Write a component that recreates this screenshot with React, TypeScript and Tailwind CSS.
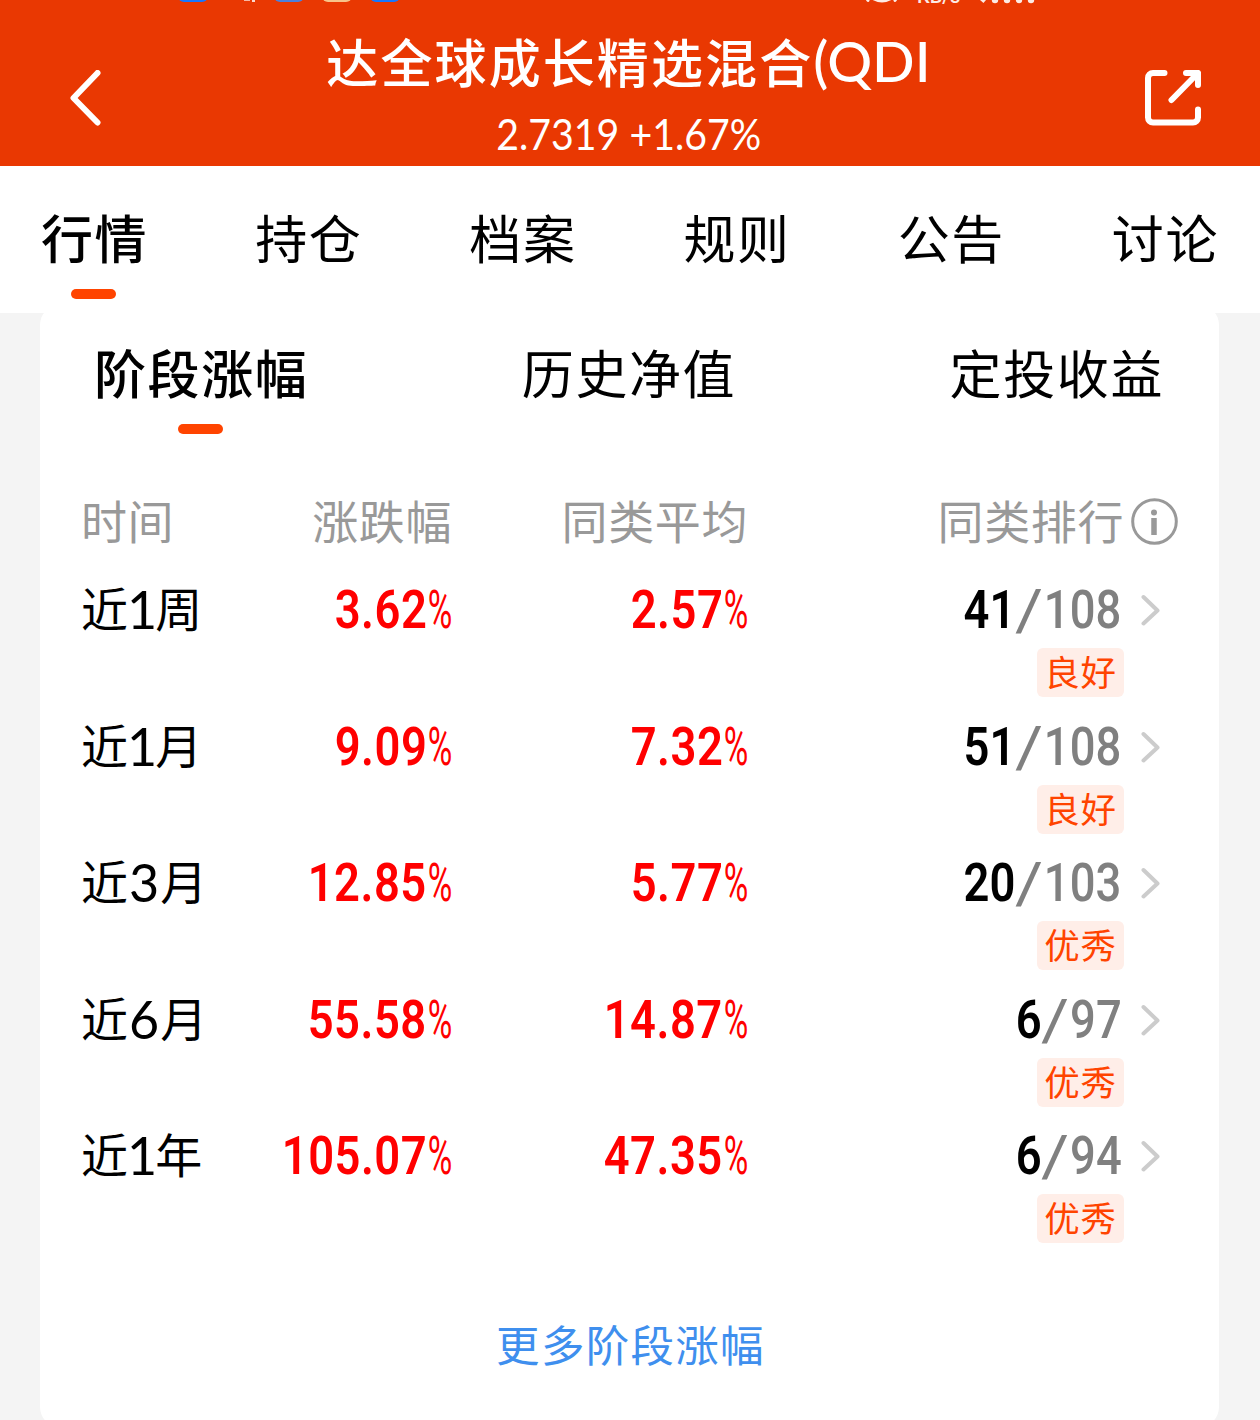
import { clsx } from "clsx";

const tabs = ["行情", "持仓", "档案", "规则", "公告", "讨论"];

const sections = ["阶段涨幅", "历史净值", "定投收益"];

const rows = [
  { pre: "近", n: "1", unit: "周", change: "3.62", average: "2.57", rank: "41", total: "108", grade: "良好" },
  { pre: "近", n: "1", unit: "月", change: "9.09", average: "7.32", rank: "51", total: "108", grade: "良好" },
  { pre: "近", n: "3", unit: "月", change: "12.85", average: "5.77", rank: "20", total: "103", grade: "优秀" },
  { pre: "近", n: "6", unit: "月", change: "55.58", average: "14.87", rank: "6", total: "97", grade: "优秀" },
  { pre: "近", n: "1", unit: "年", change: "105.07", average: "47.35", rank: "6", total: "94", grade: "优秀" },
];

// Bottom edge of the system status bar, cut off by the top of the page
function StatusBar() {
  return (
    <div className="absolute inset-x-0 top-0 h-[5px] overflow-hidden">
      <span className="absolute left-[178px] -top-[26px] h-7 w-[30px] rounded-md bg-[#1677ff]" />
      <span className="absolute left-[244px] top-0 h-px w-[6px] bg-[#f6b8a4]" />
      <span className="absolute left-[252px] top-0 h-[2px] w-[3px] bg-[#fbd9ce]" />
      <span className="absolute left-[274px] -top-[26px] h-7 w-[30px] rounded-md bg-[#4a80dd]" />
      <span className="absolute left-[322px] -top-[26px] h-7 w-[30px] rounded-md bg-[#f7c48a]" />
      <span className="absolute left-[370px] -top-[26px] h-7 w-[30px] rounded-md bg-[#1677ff]" />
      <svg className="absolute left-[864px] top-0" width="36" height="5" fill="none" stroke="#fdebe5" strokeWidth="3" strokeLinecap="round">
        <path d="M3 -1 L4 0.5 M10 -1 Q18 3 26 -1 M32 -1 L31 0.5" />
      </svg>
      <span className="absolute -top-[16px] left-[917px] font-['Roboto'] text-[20px] font-medium leading-6 text-[#fdebe5]">KB/s</span>
      <svg className="absolute left-[978px] top-0" width="60" height="5" fill="#fdebe5">
        <path d="M2 0 H8 L5.500 3 Z" />
        <circle cx="17" cy="0" r="3.200" />
        <circle cx="29" cy="0" r="3.200" />
        <circle cx="41" cy="0" r="3.200" />
        <circle cx="53" cy="0" r="3.200" />
      </svg>
    </div>
  );
}

function Header() {
  return (
    <header className="relative flex h-[166px] items-start justify-between bg-[#e93802] pl-[70px] pr-[59px] text-white">
      <StatusBar />
      <svg className="mt-[70px]" width="56" height="56" fill="none" stroke="currentColor" strokeWidth="6" strokeLinecap="round" strokeLinejoin="round">
        <path d="M27.500 3 L3.500 28 L27.500 52.500" />
      </svg>
      <div className="mr-[14px] flex flex-col items-center whitespace-nowrap">
        <h1 className="mt-[26px] flex h-[70px] items-center text-[52px] font-medium leading-[70px] tracking-[2.1px]">
          达全球成长精选混合
          <span className="font-['Lato'] text-[56px] tracking-normal">(QDI</span>
        </h1>
        <p className="mt-[11px] h-[56px] scale-x-[0.935] font-['Lato'] text-[42px] leading-[55px]">2.7319 +1.67%</p>
      </div>
      <svg className="mt-[70px]" width="56" height="56" fill="none" stroke="currentColor" strokeWidth="6" strokeLinecap="round" strokeLinejoin="round">
        <path d="M19.500 3 H8 A5 5 0 0 0 3 8 V47.500 A5 5 0 0 0 8 52.500 H48 A5 5 0 0 0 53 47.500 V39.500" />
        <path d="M41 3 H53 V15 M53 3 L26.500 30" />
      </svg>
    </header>
  );
}

function Tab({ label, active }: { label: string; active: boolean }) {
  return (
    <div className="flex flex-col items-center">
      <span className={clsx("h-[70px] whitespace-nowrap text-[52px] leading-[70px] tracking-[1.6px]", active && "font-medium")}>
        {label}
      </span>
      {active && <span className="mr-[2px] mt-[17px] h-[10px] w-[45px] rounded-full bg-[#ff4400]" />}
    </div>
  );
}

function Percent({ value }: { value: string }) {
  return (
    <div className="flex h-[60px] justify-end font-['Roboto'] text-[54px] leading-[60px] text-[#ff0000]">
      <span className="origin-right translate-x-[2px] scale-x-[0.84] font-semibold tracking-[0.6px]">{value}</span>
      <span className="-ml-[17px] w-[44px] origin-right translate-x-[3px] scale-x-[0.62]">%</span>
    </div>
  );
}

function Row({ row }: { row: (typeof rows)[number] }) {
  return (
    <div className="grid h-[136.500px] grid-cols-[151px_220px_296px_376px_1fr] items-start">
      <div className="flex h-[60px] whitespace-nowrap text-[47px] leading-[54px]">
        {row.pre}
        <span className={clsx("font-['Lato'] text-[52px] leading-[59px]", row.n === "1" ? "-ml-[1px] -mr-[2px]" : "px-px")}>{row.n}</span>
        {row.unit}
      </div>
      <Percent value={row.change} />
      <Percent value={row.average} />
      <div className="flex flex-col items-end">
        <div className="flex h-[60px] origin-right scale-x-[0.84] pr-[3px] font-['Roboto'] text-[54px] font-medium leading-[60px] text-[#808080]">
          <span className="font-semibold text-black">{row.rank}</span>
          <span className="ml-[4px] mr-[6px] origin-center scale-x-[1.4] text-[58px] font-normal">/</span>
          <span>{row.total}</span>
        </div>
        <span className="mt-[8px] flex h-[49px] w-[87px] justify-center rounded-md bg-[#ffeee8] text-[35.500px] leading-[46px] tracking-[0.8px] text-[#ff4400]">
          {row.grade}
        </span>
      </div>
      <svg className="ml-[17px] mt-[14px]" width="21" height="32" fill="none" stroke="#cccccc" strokeWidth="4" strokeLinecap="round" strokeLinejoin="round">
        <path d="M2.500 3 L16.500 16.500 L2.500 29.500" />
      </svg>
    </div>
  );
}

export default function App() {
  return (
    <div className="h-[1420px] w-[1260px] overflow-hidden bg-[#f4f4f4] font-['Noto_Sans_CJK_SC',sans-serif] text-black">
      <Header />
      <nav className="relative z-10 flex h-[147px] justify-between bg-white px-[41px] pt-[36px]">
        {tabs.map((tab, i) => (
          <Tab key={tab} label={tab} active={i === 0} />
        ))}
      </nav>

      <main className="ml-[40px] mt-[-8px] h-[1122px] w-[1179px] rounded-[20px] bg-white">
        <div className="flex h-[180px] justify-between pl-[54px] pr-[55px] pt-[32px]">
          {sections.map((section, i) => (
            <Tab key={section} label={section} active={i === 0} />
          ))}
        </div>

        <div className="pl-[41px]">
          <div className="grid h-[95px] grid-cols-[151px_220px_296px_376px_1fr] text-[46px] leading-[68px] tracking-[0.6px] text-[#999999]">
            <span>时间</span>
            <span className="text-right">涨跌幅</span>
            <span className="text-right">同类平均</span>
            <span className="text-right">同类排行</span>
            <svg className="ml-[6px] mt-[12px]" width="48" height="48" fill="none" stroke="#999999" strokeWidth="3">
              <circle cx="24.500" cy="24.500" r="21.800" />
              <circle cx="24" cy="15.500" r="3" fill="#999999" stroke="none" />
              <path d="M24 21 V38" strokeWidth="5.500" />
            </svg>
          </div>
          {rows.map((row) => (
            <Row key={row.pre + row.n + row.unit} row={row} />
          ))}
        </div>

        <p className="mt-[46px] pl-[2px] text-center text-[43.500px] leading-[70px] tracking-[1.300px] text-[#3f8fee]">更多阶段涨幅</p>
      </main>
    </div>
  );
}
